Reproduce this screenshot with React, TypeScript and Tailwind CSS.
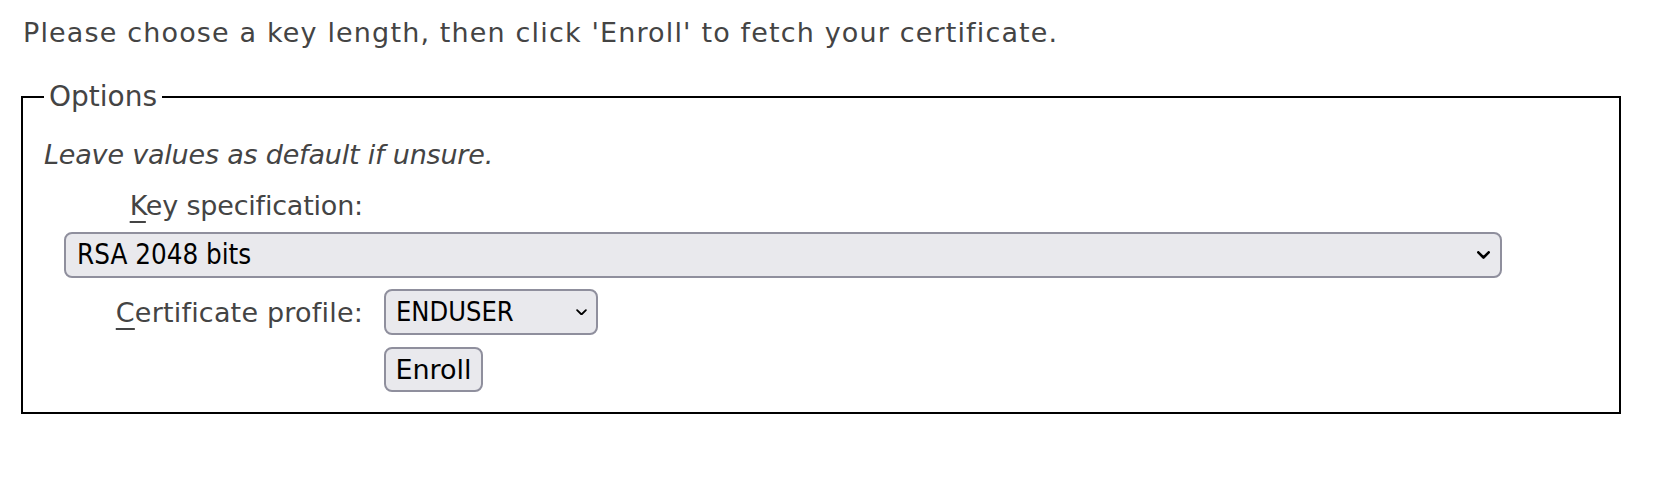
import React from "react";

const sans = { fontFamily: '"DejaVu Sans", Verdana, sans-serif' };
const condensed = { fontFamily: '"DejaVu Sans Condensed", "DejaVu Sans", sans-serif' };

function Chevron({ w = 13, stroke = 2.4 }: { w?: number; stroke?: number }) {
  return (
    <svg width={w} height={w * 0.62} viewBox="0 0 12 7.4" fill="none">
      <path d="M1.2 1.2l4.8 4.8 4.8-4.8" stroke="#000" strokeWidth={stroke} strokeLinecap="round" strokeLinejoin="round" />
    </svg>
  );
}

export default function App() {
  return (
    <div className="w-[1664px] h-[484px] bg-white text-[27px] text-[#444]" style={sans}>
      <p className="pl-[23px] pt-[15px] leading-[36px] tracking-[1.15px]">
        Please choose a key length, then click 'Enroll' to fetch your certificate.
      </p>

      <fieldset className="ml-[21px] mt-[31px] w-[1600px] border-2 border-black pl-[21px] pb-[20px]">
        <legend className="px-[5px] leading-[30px] text-[28px]">Options</legend>

        <p className="italic leading-[36px] mt-[25px] tracking-[-0.2px]">Leave values as default if unsure.</p>

        <div className="ml-[20px] flex flex-col">
          <div className="mt-[15px] w-[299px] text-right leading-[36px] tracking-[-0.2px]">
            <span className="underline decoration-2 underline-offset-[6px]">K</span>ey specification:
          </div>

          <div
            className="mt-[8px] w-[1438px] h-[46px] flex items-center justify-between rounded-[8px] border-2 border-[#8f8f9d] bg-[#e9e9ed] pl-[11px] pr-[10px] text-black text-[27.5px]"
            style={condensed}
          >
            <span>RSA 2048 bits</span>
            <Chevron w={13} stroke={2.4} />
          </div>

          <div className="mt-[11px] flex items-center gap-[21px]">
            <div className="w-[299px] text-right leading-[36px] tracking-[0.2px] pt-[2px]">
              <span className="underline decoration-2 underline-offset-[6px]">C</span>ertificate profile:
            </div>
            <div
              className="w-[214px] h-[46px] flex items-center justify-between rounded-[8px] border-2 border-[#8f8f9d] bg-[#e9e9ed] pl-[10px] pr-[9px] text-black"
              style={condensed}
            >
              <span>ENDUSER</span>
              <Chevron w={11} stroke={2} />
            </div>
          </div>

          <div className="mt-[12px] ml-[320px]">
            <button className="w-[99px] h-[45px] rounded-[8px] border-2 border-[#8f8f9d] bg-[#e9e9ed] text-black leading-none">
              Enroll
            </button>
          </div>
        </div>
      </fieldset>
    </div>
  );
}
